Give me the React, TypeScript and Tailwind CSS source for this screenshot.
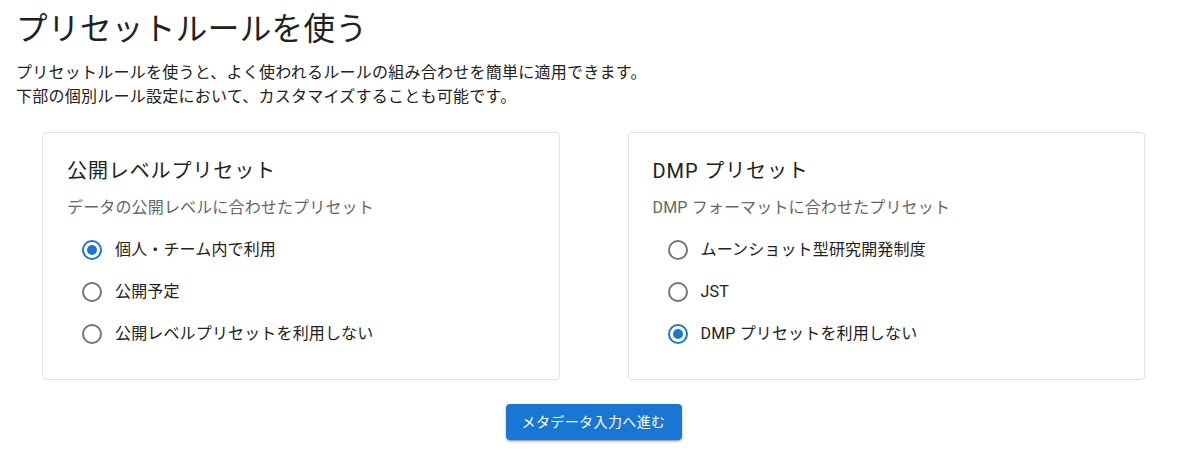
import { useState } from 'react'

interface PresetCardProps {
  title: string
  description: string
  options: string[]
  value: string
  onChange: (v: string) => void
}

function RadioIcon({ checked }: { checked: boolean }) {
  return (
    <span className="flex h-6 w-6 shrink-0 items-center justify-center">
      <span
        className={
          checked
            ? 'flex h-5 w-5 items-center justify-center rounded-full border-2 border-[#1976d2]'
            : 'flex h-5 w-5 items-center justify-center rounded-full border-2 border-[#757575]'
        }
      >
        {checked && <span className="h-[10px] w-[10px] rounded-full bg-[#1976d2]" />}
      </span>
    </span>
  )
}

function PresetCard({ title, description, options, value, onChange }: PresetCardProps) {
  return (
    <div className="flex-1 rounded-[4px] border border-[#e0e0e0] bg-white pl-6 pr-6 pt-[22px] pb-6">
      <h2 className="text-[20px] leading-[32px] tracking-[0.9px] text-[#212121]">{title}</h2>
      <p className="mt-[9px] text-[16px] leading-[24px] tracking-[0.15px] text-[#666666]">{description}</p>
      <div className="mt-[9px] flex flex-col">
        {options.map((option) => (
          <label
            key={option}
            className="flex h-[42px] cursor-pointer items-center gap-[11px] pl-[13px]"
            onClick={() => onChange(option)}
          >
            <RadioIcon checked={value === option} />
            <span className="text-[16px] leading-[24px] tracking-[0.15px] text-[#212121]">{option}</span>
          </label>
        ))}
      </div>
    </div>
  )
}

export default function App() {
  const [level, setLevel] = useState('個人・チーム内で利用')
  const [dmp, setDmp] = useState('DMP プリセットを利用しない')

  return (
    <div
      className="min-h-[453px] w-full bg-white"
      style={{ fontFamily: 'Roboto, "Noto Sans CJK JP", sans-serif' }}
    >
      <div className="pl-4 pt-[10px]">
        <h1 className="text-[31.5px] leading-[40px] tracking-[0.45px] text-[#212121]">プリセットルールを使う</h1>
        <p className="mt-[11px] text-[16px] leading-[24px] tracking-[0.25px] text-[#212121]">
          プリセットルールを使うと、よく使われるルールの組み合わせを簡単に適用できます。
          <br />
          下部の個別ルール設定において、カスタマイズすることも可能です。
        </p>
      </div>

      <div className="mt-[23px] flex gap-[68px] pl-[42px] pr-[32px]">
        <PresetCard
          title="公開レベルプリセット"
          description="データの公開レベルに合わせたプリセット"
          options={['個人・チーム内で利用', '公開予定', '公開レベルプリセットを利用しない']}
          value={level}
          onChange={setLevel}
        />
        <PresetCard
          title="DMP プリセット"
          description="DMP フォーマットに合わせたプリセット"
          options={['ムーンショット型研究開発制度', 'JST', 'DMP プリセットを利用しない']}
          value={dmp}
          onChange={setDmp}
        />
      </div>

      <div className="mt-6 flex justify-center pl-[42px] pr-[32px]">
        <button className="h-9 rounded-[4px] bg-[#1976d2] px-4 text-[14px] tracking-[0.4px] text-white shadow-[0_3px_1px_-2px_rgba(0,0,0,0.2),0_2px_2px_0_rgba(0,0,0,0.14),0_1px_5px_0_rgba(0,0,0,0.12)]">
          メタデータ入力へ進む
        </button>
      </div>
    </div>
  )
}
